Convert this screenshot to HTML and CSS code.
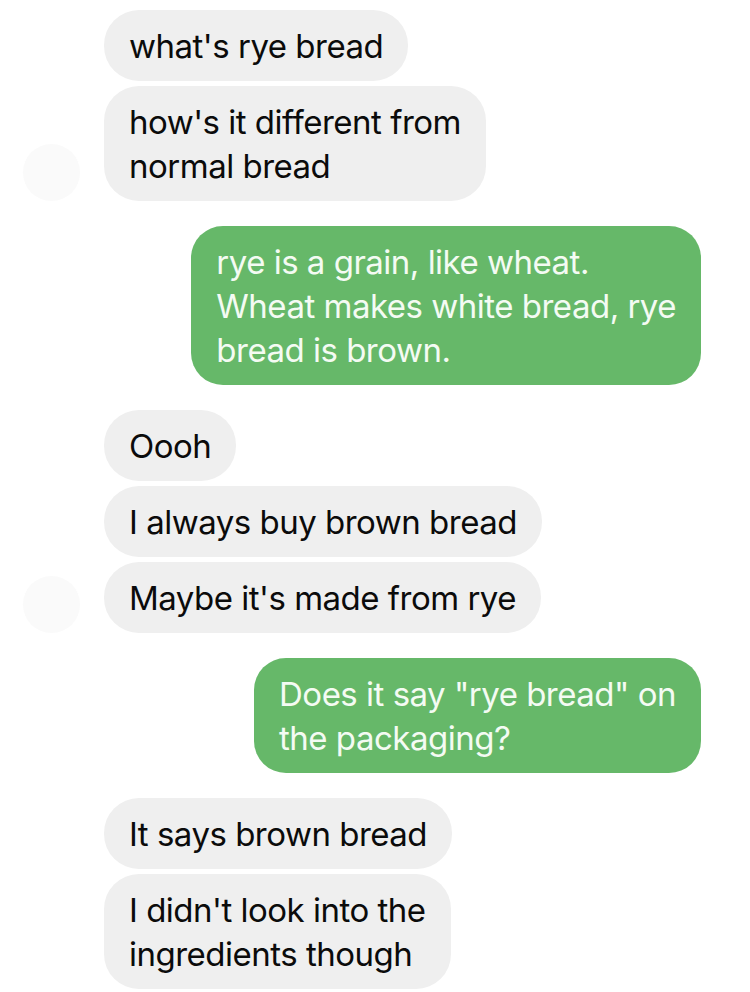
FILE: index.html
```html
<!DOCTYPE html>
<html>
<head>
<meta charset="utf-8">
<link rel="stylesheet" href="styles.css">
</head>
<body>
<div class="chat">
  <div class="group in">
    <div class="row"><div class="slot"></div><div class="bubble grey">what's rye bread</div></div>
    <div class="row"><div class="slot"><div class="avatar"></div></div><div class="bubble grey">how's it different from<br>normal bread</div></div>
  </div>
  <div class="group out">
    <div class="bubble green">rye is a grain, like wheat.<br>Wheat makes white bread, rye<br>bread is brown.</div>
  </div>
  <div class="group in">
    <div class="row"><div class="slot"></div><div class="bubble grey">Oooh</div></div>
    <div class="row"><div class="slot"></div><div class="bubble grey">I always buy brown bread</div></div>
    <div class="row"><div class="slot"><div class="avatar"></div></div><div class="bubble grey">Maybe it's made from rye</div></div>
  </div>
  <div class="group out">
    <div class="bubble green">Does it say "rye bread" on<br>the packaging?</div>
  </div>
  <div class="group in">
    <div class="row"><div class="slot"></div><div class="bubble grey">It says brown bread</div></div>
    <div class="row"><div class="slot"></div><div class="bubble grey">I didn't look into the<br>ingredients though</div></div>
  </div>
</div>
</body>
</html>
```
FILE: styles.css
```css
html, body {
  margin: 0;
  padding: 0;
  background: #ffffff;
}
body {
  width: 750px;
  height: 992px;
  overflow: hidden;
  font-family: Inter, "Liberation Sans", sans-serif;
}
.chat {
  display: flex;
  flex-direction: column;
  gap: 25px;
  padding-top: 10px;
}
.group {
  display: flex;
  flex-direction: column;
  gap: 5px;
}
.group.out {
  align-items: flex-end;
  padding-right: 49px;
}
.row {
  display: flex;
  align-items: flex-end;
}
.slot {
  width: 57px;
  margin-left: 23px;
  margin-right: 24px;
  flex: none;
}
.avatar {
  width: 57px;
  height: 57px;
  border-radius: 50%;
  background: #fafafa;
}
.bubble {
  font-size: 33px;
  line-height: 44px;
  padding: 14px 25px 13px 25px;
  border-radius: 35px;
  letter-spacing: -0.5px;
}
.grey {
  background: #efefef;
  color: #0b0b0b;
}
.green {
  background: #66b869;
  color: #f4fbf3;
  border-radius: 32px;
}
```
